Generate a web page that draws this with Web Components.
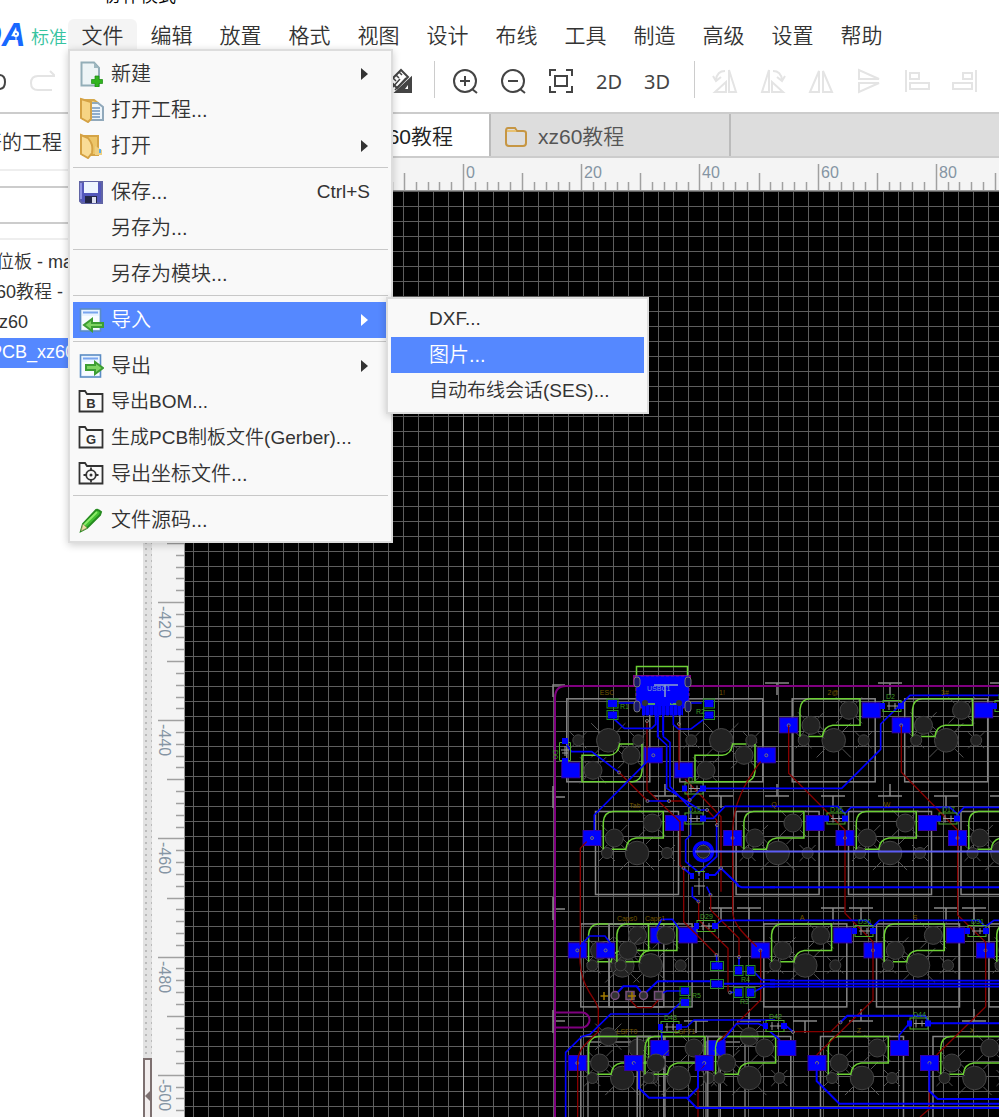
<!DOCTYPE html>
<html lang="zh-CN">
<head>
<meta charset="utf-8">
<title>PCB 编辑器</title>
<style>
body{margin:0;background:#fff;color:#333;font-family:"Liberation Sans","Noto Sans CJK SC",sans-serif;font-weight:350;overflow:hidden}
</style>
</head>
<body>
<eda-app></eda-app>
<script>
const define = (name, html, ready) => {
  const template = document.createElement('template');
  template.innerHTML = html;
  customElements.define(name, class extends HTMLElement {
    connectedCallback() {
      if (this.shadowRoot) return;
      this.attachShadow({mode: 'open'}).append(template.content.cloneNode(true));
      if (ready) ready(this, this.shadowRoot);
    }
  });
};

/* ---------- icons ---------- */
const folderFrame = '<path d="M1.5 3.5V22.5H24.500V5H9L7 2H1.500Z" fill="#fafafa" stroke="#333" stroke-width="1.800"/>';
const sheet = '<rect x="2.500" y="2" width="20" height="22" fill="#e8f3ff" stroke="#5b8cc4" stroke-width="1.600"/><path d="M5 5.500H20" stroke="#79a5ee" stroke-width="2"/><path d="M4 9H21V22H4Z" fill="#f8fcff"/>';
const ICONS = {
  new: '<path d="M3.500 1.500H16L21 7V24.500H3.500Z" fill="#edf4f6" stroke="#93aeb8"/><path d="M16 1.500V7H21Z" fill="#9fb8c0"/><path d="M17 15h4v3.500h3.500v4H21V26h-4v-3.500h-3.500v-4H17Z" fill="#31b41e" stroke="#198a10" stroke-width=".7"/>',
  project: '<path d="M4 3H16L20 6V22H5Z" fill="#f0cd77" stroke="#d5a94d"/><path d="M12 6H20L25 10V23H12Z" fill="#eef5fa" stroke="#91a9bb"/><path d="M14 11H22M14 14H22M14 17H22M14 20H22" stroke="#91adca"/><path d="M3 2L13 5V22L10 25L3 21Z" fill="#f6d484" stroke="#d5a244"/>',
  open: '<path d="M4 3H20V22H5Z" fill="#edc669" stroke="#d5a446"/><path d="M17 13L24 17V22H17Z" fill="#efcf82"/><path d="M22 16V20" stroke="#59afed" stroke-width="2"/><path d="M3 2L10 5C14 10 15 13 14 20L10 25L3 21Z" fill="#f9dc96" stroke="#d5a244"/>',
  save: '<path d="M2 3H24V24H4L2 22Z" fill="#5357bb" stroke="#6064a5"/><path d="M6 3H20V14H6Z" fill="#eef5ff"/><path d="M7 17H19V24H7Z" fill="#242747"/><path d="M14 18H18V24H14Z" fill="#dcdff0"/><path d="M3 4V20" stroke="#8f92e4" stroke-width="2"/>',
  import: sheet + '<path d="M25 16V20H14V24L6 18L14 12V16Z" fill="#7ed461" stroke="#3d9e33"/>',
  export: sheet + '<path d="M8 12V17H17V21L25 15L17 9V12Z" fill="#7ed461" stroke="#3d9e33"/>',
  bom: folderFrame, gerber: folderFrame,
  place: folderFrame + '<circle cx="13" cy="14" r="4.800" fill="none" stroke="#333" stroke-width="1.800"/><circle cx="13" cy="14" r="1.500" fill="#333"/><path d="M13 6.500V9M13 19V21.500M5.500 14H8M18 14H20.500" stroke="#333" stroke-width="1.800"/>',
  source: '<path d="M3 24L5 17L18 3Q20 2 23 5L22 8L9 21Z" fill="#42bf32" stroke="#268b20"/><path d="M6 18L19 5" stroke="#8bec68" stroke-width="2"/><path d="M3 24L5 17L9 21Z" fill="#eddca5" stroke="#92955e" stroke-width=".7"/>',
  undo: '<path d="M8 7H18Q24 7 24 14T18 21H8"/>',
  redo: '<path d="M21 3L26 8H9Q2 8 2 15T9 22H23"/>',
  measure: '<path d="M2 13L13 2L20 9L9 20Z"/><path d="M5 10L8 13M8 7L11 10M11 4L14 7M3 21L12 11M7 22L18 10" stroke-width="1.500"/><path d="M8 24L23 10V24Z" fill="#444"/><path d="M17 21H20V17Z" fill="#fff" stroke="none"/>',
  zoomin: '<circle cx="13" cy="13" r="11"/><path d="M8 13H18M13 8V18M20 21L25 25"/>',
  zoomout: '<circle cx="13" cy="13" r="11"/><path d="M8 13H18M20 21L25 25"/>',
  fit: '<path d="M8 2H2V8M18 2H24V8M24 18V24H18M8 24H2V18"/><rect x="7" y="8" width="12" height="10"/>',
  rotl: '<path d="M17 2L24 24H17Z M14 14V24H3Z M4 12Q5 3 13 3M1 8L4 13L9 9"/>',
  rotr: '<path d="M9 2L2 24H9Z M12 14V24H23Z M22 12Q21 3 13 3M17 9L22 13L25 8"/>',
  fliph: '<path d="M11 3V24H2Z M15 3V24H24Z"/>',
  flipv: '<path d="M3 2V11H23Z M3 24V15H23Z"/>',
  alignl: '<path d="M2 2V24"/><rect x="6" y="5" width="9" height="6"/><rect x="6" y="15" width="19" height="6"/>',
  alignr: '<path d="M24 2V24"/><rect x="11" y="5" width="9" height="6"/><rect x="1" y="15" width="19" height="6"/>'
};
const letters = {bom: 'B', gerber: 'G'};

define('eda-icon', `<style>:host{display:block;width:26px;height:26px}svg{display:block}text{font:bold 13px "Liberation Sans",sans-serif;fill:#333}</style><svg width="26" height="26" viewBox="0 0 26 26" fill="none" stroke="currentColor" stroke-width="2"></svg>`, (host, root) => {
  const name = host.getAttribute('name'), svg = root.querySelector('svg');
  svg.innerHTML = ICONS[name] + (letters[name] ? `<text x="13" y="19" text-anchor="middle" stroke="none">${letters[name]}</text>` : '');
  if (['new','project','open','save','import','export','bom','gerber','place','source'].includes(name)) svg.setAttribute('stroke', 'none');
});

define('menu-row', `<style>
:host{display:block;position:relative}
button{display:flex;align-items:center;width:100%;height:36px;padding:0 18px 0 5px;border:0;background:none;color:inherit;font:inherit;font-size:20px;line-height:36px;text-align:left;white-space:nowrap}
.icon{width:33px;flex:none}
.label{flex:1}
:host([mixed]) button{font-size:19px}
:host([active]) button{background:#58f;color:#fff}
.key{font-size:19px}
.arrow{width:0;height:0;border:6px solid transparent;border-left:7px solid;border-right:0;margin-right:2px}
</style><button role="menuitem"><span class="icon"></span><span class="label"><slot></slot></span></button><slot name="sub"></slot>`, (host, root) => {
  const button = root.querySelector('button');
  if (host.hasAttribute('icon')) root.querySelector('.icon').innerHTML = `<eda-icon name="${host.getAttribute('icon')}"></eda-icon>`;
  if (host.hasAttribute('key')) button.insertAdjacentHTML('beforeend', `<span class="key">${host.getAttribute('key')}</span>`);
  if (host.hasAttribute('arrow')) button.insertAdjacentHTML('beforeend', '<span class="arrow"></span>');
});

define('menu-line', `<style>:host{display:block;height:1px;margin:3px 0 6px;background:#c8c8c8}</style>`);

define('menu-panel', `<style>
:host{display:block;box-sizing:border-box;position:absolute;border:2px solid #ddd;background:#f9f9f9;color:#333;box-shadow:0 2px 8px rgba(0,0,0,.2);padding:5px 3px 3px;left:0;top:30px;width:325px;z-index:5}
:host([nested]){left:313px;top:-5px;width:263px;padding:2px 3px 3px}
</style><slot></slot>`);

define('menu-title', `<style>
:host{display:block;position:relative;width:69px;height:31px}
button{width:100%;height:100%;border:0;padding:2px 0 0;background:none;color:#333;font:inherit;font-size:21px;line-height:29px;border-radius:6px 6px 0 0}
:host([open]) button{background:#f4f4f4}
</style><button><slot></slot></button><slot name="menu"></slot>`);

define('tool-button', `<style>
:host{display:block;width:48px;flex:none}
button{display:flex;width:100%;height:48px;align-items:center;justify-content:center;border:0;padding:0;background:none;color:#444;font:20px "Noto Sans",sans-serif}
:host([off]) button{color:#e4e4e4}
</style><button><slot></slot></button>`, (host, root) => {
  if (host.hasAttribute('icon')) root.querySelector('button').innerHTML = `<eda-icon name="${host.getAttribute('icon')}"></eda-icon>`;
});

define('doc-tab', `<style>
:host{display:block;box-sizing:border-box;width:240px;flex:none;border-right:2px solid #bbb}
:host([active]){width:339px;background:#fff;color:#222}
a{display:flex;align-items:center;gap:10px;height:100%;box-sizing:border-box;padding:3px 0 0 13px;color:inherit;text-decoration:none;font-size:21px;line-height:39px}
:host([active]) a{justify-content:flex-end;padding:3px 36px 0 0}
</style><a href="#"><svg width="24" height="22" fill="none" stroke="#c69643" stroke-width="2"><path d="M2 5V17Q2 20 5 20H19Q22 20 22 17V7Q22 5 19 5H13L11 2H4Q2 2 2 5Z"/><path d="M3 5H12" stroke="#e7c172"/></svg><slot></slot></a>`);

define('project-panel', `<style>
:host{display:block;width:143px;flex:none;overflow:hidden;color:#333}
h2{margin:0;font-size:20px;font-weight:inherit;line-height:58px;height:55px;margin-left:-38px;white-space:nowrap}
.search{height:53px;border-top:2px solid #eee;padding-top:15px;border-bottom:2px solid #eee;box-sizing:border-box}
.search{height:71px}
input{box-sizing:border-box;display:block;width:100%;height:38px;border:2px solid #ccc;border-width:2px 0;outline:0;padding:0}
ul{list-style:none;margin:0;padding:8px 0 0;font-size:18px;line-height:28px}
li{height:30px;white-space:nowrap}
a{color:inherit;text-decoration:none;margin-left:-4px}
.child a{margin-left:-10px}
.selected{background:#58f;color:#fff}
</style><h2>打开的工程</h2><div class="search"><input aria-label="过滤"></div>
<ul><li><a href="#">位板 - master</a></li><li><a href="#">60教程 - master</a></li><li class="child"><a href="#">xz60</a></li><li class="child selected"><a href="#">PCB_xz60</a></li></ul>`);

define('split-bar', `<style>
:host{display:flex;flex-direction:column;justify-content:flex-end;width:9px;flex:none;background:#e2e2e2 radial-gradient(circle,#bbb 1px,transparent 1px) 0 0/6px 6px}
div{height:59px;border:2px solid #7d7070;border-bottom:0;background:#f2eeee;display:flex;align-items:center;padding-top:14px;box-sizing:border-box}
i{border:5px solid transparent;border-right-color:#7d7070;border-left:0}
</style><div><i></i></div>`);

/* Ruler: one tick each 2 units, a longer one each 10, a labelled one each 20. */
define('ruler-bar', `<style>
:host{display:block;position:relative;background:#f4f4f4;overflow:hidden;min-width:0;min-height:0}
svg{position:absolute;inset:0;width:100%;height:100%}
text{font:16px "Liberation Sans",sans-serif;fill:#8594a3}
</style><svg></svg>`, (host, root) => {
  const vertical = host.hasAttribute('vertical');
  const zero = vertical ? 602 - 191 : 463 - 152, step = 11.82;
  const draw = () => {
    const size = vertical ? host.clientHeight : host.clientWidth;
    let out = '';
    for (let n = -Math.floor(zero / step); zero + n * step < size; n++) {
      const at = Math.round(zero + n * step), len = n % 10 === 0 ? 26 : n % 5 === 0 ? 17 : 8;
      out += vertical ? `<path d="M${32 - len} ${at}.500H32"/>` : `<path d="M${at}.500 ${32 - len}V32"/>`;
      if (n % 10 === 0) out += vertical ? `<text stroke="none" transform="translate(7 ${at + 4}) rotate(90)">${-420 - n * 2}</text>` : `<text stroke="none" x="${at + 3}" y="20">${n * 2}</text>`;
    }
    root.querySelector('svg').innerHTML = `<g stroke="#a0a0a0" stroke-width="1.500">${out}</g>` +
      (vertical ? '<rect x="32" width="1" height="100%" fill="#999"/>' : '<rect y="32" width="100%" height="1" fill="#999"/>');
  };
  new ResizeObserver(draw).observe(host);
});

/* ---------- board drawing ---------- */
const dot = (x, y, r) => {
  const a = r * .75, b = r * 1.45;
  return `<path d="M${x-b} ${y-b}L${x-a} ${y-a}M${x+a} ${y+a}L${x+b} ${y+b}M${x-b} ${y+b}L${x-a} ${y+a}M${x+a} ${y-a}L${x+b} ${y-b}" stroke="#555"/><path d="M${x-r*.8} ${y-r*.8}" /><circle cx="${x}" cy="${y}" r="${r}" fill="#222" stroke="#444"/>`;
};
const key = (x, y, turned) => `<g transform="translate(${x} ${y})${turned ? ' rotate(180)' : ''}">
<rect x="-41.500" y="-41.500" width="83" height="83" stroke="#858585" stroke-width="1.500"/>
${dot(0,0,11.8)}${dot(-30,0,5.5)}${dot(30,0,5.5)}${dot(-22.7,-15,9)}${dot(15.3,-30,9)}
<path d="M-33.700 -3.700V-31Q-33 -41 -24 -41.500H26.300V-15H-1Q-10 -14 -11.300 -3.700H-25" stroke="#6cd035" stroke-width="1.500"/>
<rect x="28.500" y="-37.500" width="18" height="15" fill="#00f" stroke="#30a"/>
<rect x="-54" y="-22.500" width="18" height="15" fill="#00f" stroke="#30a"/><circle cx="-45" cy="-15" r="1.500" stroke="#777"/></g>`;
const diode = (x, y, name) => `<rect x="${x-9}" y="${y-5.5}" width="18" height="11" stroke="#4fa82b"/><path d="M${x-5} ${y}H${x+6}M${x-3} ${y-4}V${y+4}M${x+3} ${y-3}V${y+3}" stroke="#999"/><rect x="${x+6}" y="${y-3}" width="6" height="6" fill="#00f"/><rect x="${x-12}" y="${y-3}" width="5" height="6" fill="#00f"/><text x="${x-6}" y="${y-7}" fill="#3f9a26">${name}</text>`;
const tee = (x, y, up) => `<path d="M${x-12} ${y}H${x+12}M${x} ${y}v${up ? -12 : 12}" stroke="#888" stroke-width="1.500"/>`;
const pads = list => list.map(([x, y, w, h]) => `<rect x="${x-w/2}" y="${y-h/2}" width="${w}" height="${h}" fill="#00f"/><rect x="${x-w/2-1}" y="${y-h/2-1}" width="${w+2}" height="${h+2}" stroke="#278a24"/>`).join('');
/* Traces are kept in thirds of a pixel from the corner of their quarter of the board. */
const quarter = (x, y, red, blue, bus) => `<g transform="translate(${x} ${y}) scale(.33333)"><path d="${red}" stroke="#850000" stroke-width="4"/><path d="${blue}" stroke="#00f" stroke-width="5"/><path d="${bus}" stroke="#00f" stroke-width="6"/></g>`;
const vias = list => list.map(([x, y]) => `<circle cx="${x}" cy="${y}" r="1.500" stroke="#777"/>`).join('');
const label = (x, y, t) => `<text x="${x}" y="${y}" text-anchor="middle" fill="#755800">${t}</text>`;

const board = () => {
  const keys = [[608.3,740.3,1],[721.3,740.3,1],[833.7,740.3],[946.2,740.3],[637,853],[777.6,853],[890,853],[1002.5,853],
    [622.3,965.4],[650.6,965.4],[805.3,965.4],[918,965.4],[1030.5,965.4],[622.3,1078],[678.7,1078],[749.3,1078],[862,1078],[974.5,1078]];
  return [
    [777,683],[890,683],[1002,683],[721,796],[833,796],[946,796],[721,908],[749,908],[833,908],[861,908],[946,908],[974,908],[696,1021],[805,1021],
  ].map(p => tee(...p)).join('') + [[665,796],[777,796],[890,796],[1002,796],[749,1021],[861,1021],[974,1021]].map(p => tee(p[0], p[1], 1)).join('') +
  '<path d="M565 685H553V697M553 786V808M553 797H565M553 897V920M553 909H565M553 1010V1033M553 1021H565" stroke="#888" stroke-width="1.500"/>' +
  '<path d="M999 686H690V676H634V686H566Q555 686 555 698V1117M555 1012.500H582A7 7 0 0 1 582 1027.500H555" stroke="#800080" stroke-width="2"/>' +
  '<path d="M588 1117V1042H640V1117M665 1117V1037M706 1117V1042H740M745 1117V1037M609 924V1007" stroke="#777" stroke-width="1.500"/>' +
  dot(608.3,1036.7,9) + dot(749.3,1036.7,9) +
  keys.map(k => key(...k)).join('') +
  quarter(545, 655,
    'M306 198V405L405 500V630L416 640V690M402 207V345M420 372L528 485V690M222 352L308 438M372 438H434L420 395M487 465L515 495V510M647 320C600 380 566 450 563 520V690M125 560L106 580V690',
    'M65 270L80 290H140L222 352M320 306L148 480V530M205 190L238 220H320L332 208V170M480 190L438 222H400L385 208V175M338 150V245L365 270V400L465 465H487M355 150V245L375 262V395L437 460V540L422 555V620L465 655M515 510V605L460 655M435 435L470 400H690M480 490H505L540 454H690M220 144H270M435 144H470M308 438H372',
    'M308 180V130H345M400 180V140H370M415 640L440 660M487 660H510L528 640L580 690M326 180V165H390V180') +
  quarter(770, 655,
    'M56 211V355L225 525V690M394 211V352L563 525V690',
    'M0 400H215L332 283V207L420 121H690M0 454H203L225 475L243 457H540L563 478L582 457H690', '') +
  quarter(545, 885,
    'M106 0V190C95 310 160 340 160 375V440C110 485 98 500 98 534V696M416 0V110L515 210M497 30V75L582 160V216M461 50V105L549 190V320M563 0V80C565 120 600 150 635 185M647 196V345L520 470M478 540L459 560V696M255 345L277 368H320L340 345M528 0V20',
    'M62 696V502L110 455L135 448L197 387H370L410 350M340 330L365 318H410M330 140L350 103H382L410 140M100 190L133 153H180L208 190M510 122L530 106H690M350 430V480M404 426H425L447 405H690M515 490L575 416H640L662 425M442 5V35L461 50M485 5L497 30M515 210V240M582 216V245M625 258L650 285H690M555 322H580M625 322L655 305H690',
    'M211 330L235 304H275L295 330L338 289H500M534 296H690M267 534L282 560V610L312 638H430L459 608V560L478 534M425 638L455 669H690M575 0L590 7H690') +
  quarter(770, 885,
    'M225 0V85L309 170V345L140 510M563 0V90L647 172V365L500 510M69 440H182L211 412M478 560V672L450 696',
    'M0 106H290L309 125L328 106H628L645 125L672 106H690M0 287H690M0 305H690M45 420L69 440M418 415L388 450V480M0 440L30 465',
    'M0 7H690M0 296H690M211 412L232 392H465L478 415H690M140 534V588L208 656H690M478 534V618L503 642H690M0 669H690') +
  /* USB connector */
  '<rect x="636.500" y="666.500" width="51" height="40" stroke="#6cd035" stroke-width="1.500"/><path d="M636 676H689V708H636Z" fill="#00f" stroke="#6a19a0" stroke-dasharray="3 2"/><path d="M642 706H683V715H642Z" fill="#00b"/><path d="M642 710H683" stroke="#00f" stroke-width="11" stroke-dasharray="3 1"/>' +
  '<g fill="#191966" stroke="#777"><rect x="634" y="677" width="6" height="10" rx="3"/><rect x="685" y="677" width="6" height="10" rx="3"/><rect x="634" y="701" width="6" height="11" rx="3"/><rect x="685" y="701" width="6" height="11" rx="3"/></g><path d="M654 685H678M665 685V697" stroke="#8ba0cc" stroke-width="1.500"/><path d="M648 704H655M670 704H677" stroke="#6cd035" stroke-width="1.500"/><circle cx="645" cy="703" r="3" fill="#333"/><circle cx="679" cy="703" r="3" fill="#333"/><text x="647" y="691" fill="#7995d5">USBC1</text>' +
  '<g stroke="#00f" stroke-width="1.500"><path d="M658 735V704Q661 699 663 704V735M652 701V698H672V704"/></g>' +
  pads([[612.5,703.5,9,7],[612.5,715,9,7],[709,703.5,9,7],[709,715,9,7],[685,991,8,7],[685,1002.5,8,7],[717,966,11,7],[717,984,11,7],[738.5,970.5,7,8],[750.5,970.5,7,8],[738.5,992.5,7,8],[750.5,992.5,7,8]]) +
  '<path d="M559.500 742.500H570.500V760.500H559.500ZM695 871.500H705" stroke="#4fa82b"/><path d="M565 746V756M561 750H569M562 753H568M699 878V895M694 886H705M699 871V876" stroke="#999"/><path d="M562 738H568V744H562ZM562 758H568V764H562ZM690 873H694V879H690ZM705 873H709V879H705Z" fill="#00f"/>' +
  [[892,706,'D2'],[1004,706,'D3'],[694,788.500,'D1'],[694,818.500,'D15'],[836,818.500,'D16'],[948,818.500,'D17'],[706,926,'D29'],[864,931,'D30'],[977,931,'D31'],[670,1027,'D43'],[775,1026,'D42'],[919,1023.500,'D44']].map(d => diode(...d)).join('') +
  '<circle cx="703.300" cy="851.700" r="9" stroke="#00f" stroke-width="3.500"/><circle cx="703.300" cy="851.700" r="6.500" fill="#222" stroke="#555"/><path d="M695 851.500H999" stroke="#5c5cf5" stroke-width="2"/>' +
  '<g fill="#333" stroke="#76507b" stroke-width="1.500"><circle cx="615" cy="995.500" r="4"/><rect x="626" y="991.500" width="8" height="8"/><circle cx="643.500" cy="995.500" r="4"/><rect x="654.500" y="991.500" width="8" height="8"/></g><path d="M600.500 996H608M604 992V1000M628 996H636M632 992V1000" stroke="#a37b00" stroke-width="1.500"/>' +
  vias([[619,772.5],[647.5,801],[669,801],[689.7,800],[707,810],[717,825],[647,721],[679,724],[683.500,868],[721,868],[710.5,895],[698.5,901.5],[716.5,955],[739,957],[730,992.5],[793,1032],[840.5,1022.3]]) +
  label(607,695,'ESC')+label(722,695,'1!')+label(833,695,'2@')+label(945,695,'3#')+label(635,808,'Tab')+label(774,807,'Q')+label(887,807,'W')+label(627,921,'Caps0')+label(655,921,'Caps1')+label(802,920,'A')+label(915,920,'S')+label(627,1034,'LSFT0')+label(685,1034,'LSFT1')+label(859,1033,'Z')+label(972,1033,'X')+
  '<g fill="#3f9a26"><text x="620" y="709">R1</text><text x="696" y="714">R2</text><text x="692" y="998">R5</text><text x="741" y="982">R4</text><text x="740" y="1004">R3</text><text transform="translate(553 750) rotate(90)">D0</text></g>';
};

define('pcb-canvas', `<style>
:host{display:block;position:relative;overflow:hidden;background:#000;min-height:0;min-width:0}
svg{position:absolute;inset:0;width:100%;height:100%}
text{font:7px "Liberation Sans",sans-serif}
</style><svg fill="none"><defs><pattern id="grid" width="15" height="15" patternUnits="userSpaceOnUse" x="8" y="0"><path d="M.5 0V15M0 .5H15" stroke="#5e5e5e"/></pattern></defs>
<rect width="100%" height="100%" fill="url(#grid)"/><path d="M278.500 0V2000" stroke="#999"/><g id="board"></g></svg>`, (host, root) => {
  root.querySelector('#board').innerHTML = `<g transform="translate(-185 -191)">${board()}</g>`;
});

define('eda-app', `<style>
:host{display:flex;flex-direction:column;min-height:100vh;background:#fff}
.title{height:19px;overflow:hidden;color:#000}
.title p{margin:-12px 0 0;font-size:18px;line-height:16px;padding-left:104px}
nav{display:flex;height:31px;position:relative;z-index:3}
.logo{width:68px;flex:none;display:flex;overflow:hidden;position:relative;white-space:nowrap;align-items:center}
.logo b{font-size:33px;font-style:italic;font-weight:900;line-height:31px;color:#1868ff;margin-left:-22px;width:53px;flex:none}
.logo svg{position:absolute;left:12px;top:11px}
.logo span{font-size:18px;color:#36c3a0;line-height:24px;padding-top:6px}
.tools{display:flex;align-items:center;height:62px;border-bottom:2px solid #ccc;overflow:hidden}
.tools tool-button:first-child{margin-left:-30px}
.gap{width:311px;flex:none}
.bar{width:1px;height:37px;background:#ccc;margin:0 6px 4px 9px;flex:none}
.bar.wide{margin-left:13px}
main{flex:1;display:flex}
.editor{flex:1;min-width:0;display:flex;flex-direction:column}
.tabs{display:flex;height:42px;background:#ddd;border-bottom:2px solid #ccc;color:#555}
.view{flex:1;display:grid;grid-template:33px 1fr/33px 1fr}
.view ruler-bar:first-child{grid-column:1/3}
</style>
<header><div class="title"><p>协作模式</p></div>
<nav><div class="logo"><b>DA</b><svg width="8" height="15"><path d="M4 5V15" stroke="#fff"/><circle cx="4" cy="4" r="3" fill="#fff"/><circle cx="4" cy="4" r="1" fill="#1868ff"/></svg><span>标准</span></div>
<menu-title open>文件<menu-panel slot="menu" role="menu">
<menu-row icon="new" arrow>新建</menu-row><menu-row icon="project">打开工程...</menu-row><menu-row icon="open" arrow>打开</menu-row><menu-line></menu-line>
<menu-row icon="save" key="Ctrl+S">保存...</menu-row><menu-row>另存为...</menu-row><menu-line></menu-line>
<menu-row>另存为模块...</menu-row><menu-line></menu-line>
<menu-row icon="import" arrow active>导入<menu-panel nested slot="sub" role="menu"><menu-row mixed>DXF...</menu-row><menu-row active>图片...</menu-row><menu-row mixed>自动布线会话(SES)...</menu-row></menu-panel></menu-row><menu-line></menu-line>
<menu-row icon="export" arrow>导出</menu-row><menu-row icon="bom" mixed>导出BOM...</menu-row><menu-row icon="gerber" mixed>生成PCB制板文件(Gerber)...</menu-row><menu-row icon="place">导出坐标文件...</menu-row><menu-line></menu-line>
<menu-row icon="source">文件源码...</menu-row></menu-panel></menu-title>
<menu-title>编辑</menu-title><menu-title>放置</menu-title><menu-title>格式</menu-title><menu-title>视图</menu-title><menu-title>设计</menu-title><menu-title>布线</menu-title><menu-title>工具</menu-title><menu-title>制造</menu-title><menu-title>高级</menu-title><menu-title>设置</menu-title><menu-title>帮助</menu-title></nav>
<div class="tools"><tool-button icon="undo"></tool-button><tool-button icon="redo" off></tool-button><span class="gap"></span><tool-button icon="measure"></tool-button><span class="bar"></span>
<tool-button icon="zoomin"></tool-button><tool-button icon="zoomout"></tool-button><tool-button icon="fit"></tool-button><tool-button>2D</tool-button><tool-button>3D</tool-button><span class="bar wide"></span>
<tool-button icon="rotl" off></tool-button><tool-button icon="rotr" off></tool-button><tool-button icon="fliph" off></tool-button><tool-button icon="flipv" off></tool-button><tool-button icon="alignl" off></tool-button><tool-button icon="alignr" off></tool-button></div></header>
<main><project-panel></project-panel><split-bar></split-bar>
<section class="editor"><div class="tabs"><doc-tab active>xz60教程</doc-tab><doc-tab>xz60教程</doc-tab></div>
<div class="view"><ruler-bar></ruler-bar><ruler-bar vertical></ruler-bar><pcb-canvas></pcb-canvas></div></section></main>`);
</script>
</body>
</html>
